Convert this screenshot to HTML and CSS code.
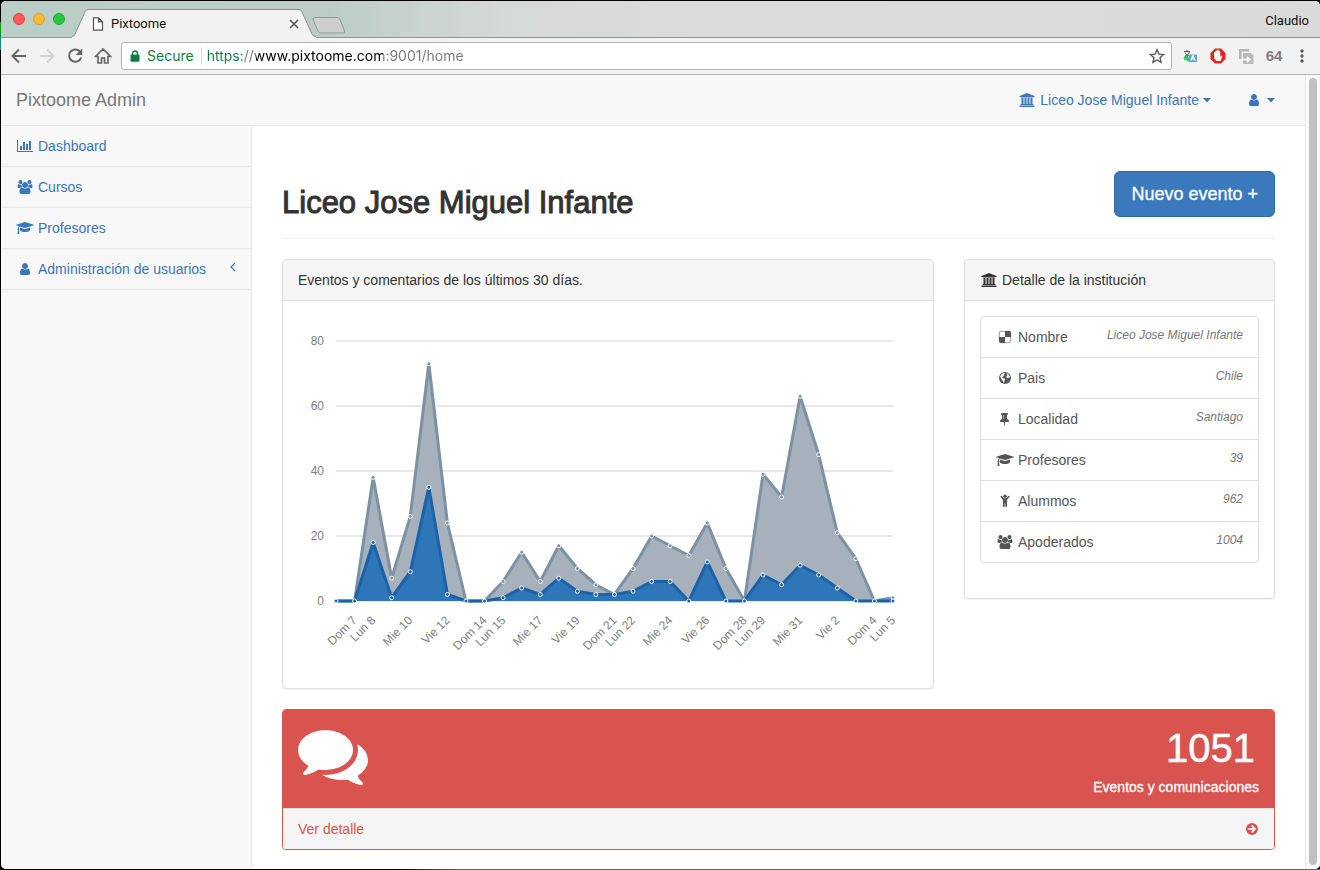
FILE: index.html
```html
<!DOCTYPE html>
<html lang="es">
<head>
<meta charset="utf-8">
<title>Pixtoome</title>
<link rel="stylesheet" href="styles.css">
</head>
<body>
<svg class="sprite" aria-hidden="true">
  <symbol id="i-user" viewBox="0 0 1792 1792"><path d="M1536 1399q0 109-62.5 187t-150.5 78h-854q-88 0-150.5-78t-62.5-187q0-85 8.5-160.5t31.5-152 58.5-131 94-89 134.5-34.5q131 128 313 128t313-128q76 0 134.5 34.5t94 89 58.5 131 31.5 152 8.5 160.5zm-256-887q0 159-112.5 271.5t-271.5 112.5-271.5-112.5-112.5-271.5 112.5-271.5 271.5-112.5 271.5 112.5 112.5 271.5z"/></symbol>
  <symbol id="i-chart" viewBox="0 0 2048 1792"><path d="M640 896v512h-256v-512h256zm384-512v1024h-256v-1024h256zm1024 1152v128h-2048v-1536h128v1408h1920zm-640-896v768h-256v-768h256zm384-384v1152h-256v-1152h256z"/></symbol>
  <symbol id="i-bank" viewBox="0 0 1920 1792"><path d="M960 0l960 384v128h-128q0 26-20.5 45t-48.5 19h-1526q-28 0-48.5-19t-20.5-45h-128v-128zm-704 640h256v768h128v-768h256v768h128v-768h256v768h128v-768h256v768h59q28 0 48.5 19t20.5 45v64h-1664v-64q0-26 20.5-45t48.5-19h59v-768zm1595 960q28 0 48.5 19t20.5 45v128h-1920v-128q0-26 20.5-45t48.5-19h1782z"/></symbol>
  <symbol id="i-cap" viewBox="0 0 2304 1792"><path d="M1774 836l18 316q4 69-82 128t-235 93.5-323 34.5-323-34.5-235-93.5-82-128l18-316 574 181q22 7 48 7t48-7zm530-324q0 23-22 31l-1120 352q-4 1-10 1t-10-1l-652-206q-43 34-71 111.5t-34 178.5q63 36 63 109 0 69-58 107l58 433q2 14-8 25-9 11-24 11h-192q-15 0-24-11-10-11-8-25l58-433q-58-38-58-107 0-73 65-111 11-207 98-330l-333-104q-22-8-22-31t22-31l1120-352q4-1 10-1t10 1l1120 352q22 8 22 31z"/></symbol>
  <symbol id="i-users" viewBox="0 0 1920 1792"><path d="M593 896q-162 5-265 128h-134q-82 0-138-40.5t-56-118.5q0-353 124-353 6 0 43.5 21t97.5 42.5 119 21.5q67 0 133-23-5 37-5 66 0 139 81 256zm1071 637q0 120-73 189.5t-194 69.5h-874q-121 0-194-69.5t-73-189.5q0-53 3.5-103.5t14-109 26.5-108.5 43-97.5 62-81 85.5-53.5 111.5-20q10 0 43 21.5t73 48 107 48 135 21.5 135-21.5 107-48 73-48 43-21.5q61 0 111.5 20t85.5 53.5 62 81 43 97.5 26.5 108.5 14 109 3.500 103.500zm-1024-1277q0 106-75 181t-181 75-181-75-75-181 75-181 181-75 181 75 75 181zm704 384q0 159-112.500 271.500t-271.500 112.500-271.500-112.500-112.500-271.500 112.500-271.500 271.500-112.500 271.500 112.500 112.500 271.500zm576 225q0 78-56 118.500t-138 40.500h-134q-103-123-265-128 81-117 81-256 0-29-5-66 66 23 133 23 59 0 119-21.500t97.500-42.500 43.500-21q124 0 124 353zm-128-609q0 106-75 181t-181 75-181-75-75-181 75-181 181-75 181 75 75 181z"/></symbol>
  <symbol id="i-comments" viewBox="0 0 1792 1792"><path d="M1408 768q0 139-94 257t-256.500 186.500-353.500 68.500q-86 0-176-16-124 88-278 128-36 9-86 16h-3q-11 0-20.500-8t-11.500-21q-1-3-1-6.500t.5-6.500 2-6l2.500-5 3.500-5.500 4-5 4.500-5 4-4.500q5-6 23-25t26-29.500 22.500-29 25-38.500 20.500-44q-124-72-195-177t-71-224q0-139 94-257t256.500-186.500 353.500-68.500 353.500 68.500 256.500 186.500 94 257zm384 256q0 120-71 224.500t-195 176.500q10 24 20.500 44t25 38.500 22.500 29 26 29.500 23 25q1 1 4 4.500t4.500 5 4 5 3.500 5.500l2.500 5 2 6 .5 6.500-1 6.500q-3 14-13 22t-22 7q-50-7-86-16-154-40-278-128-90 16-176 16-271 0-472-132 58 4 88 4 161 0 309-45t264-129q125-92 192-212t67-254q0-77-23-152 129 71 204 178t75 230z"/></symbol>
  <symbol id="i-pin" viewBox="0 0 1536 1792"><path transform="translate(-192 0)" fill-rule="evenodd" d="M800 864v-448q0-14-9-23t-23-9-23 9-9 23v448q0 14 9 23t23 9 23-9 9-23zm672 352q0 26-19 45t-45 19h-429l-51 483q-2 12-10.500 20.500t-20.500 8.500h-1q-27 0-32-27l-76-485h-404q-26 0-45-19t-19-45q0-123 78.500-221.500t177.500-98.500v-512q-52 0-90-38t-38-90 38-90 90-38h640q52 0 90 38t38 90-38 90-90 38v512q99 0 177.500 98.500t78.500 221.500z"/></symbol>
  <symbol id="i-go" viewBox="0 0 14 14"><circle cx="7" cy="7" r="6"/><path d="M3.400 7h6.400M6.600 3.600 10 7l-3.400 3.400" fill="none" stroke="#f5f5f5" stroke-width="1.800"/></symbol>
  <symbol id="i-delicious" viewBox="0 0 14 14"><rect x="1.300" y="1.300" width="11.400" height="11.400" rx="1.800" fill="#fff" stroke="currentColor" stroke-width=".6"/><path d="M7 1h4.200A1.800 1.800 0 0 1 13 2.800V7H7zM1 7h6v6H2.800A1.800 1.800 0 0 1 1 11.200z"/></symbol>
  <symbol id="i-globe" viewBox="0 0 14 14"><circle cx="7" cy="7" r="6"/><path fill="#fff" d="M3.200 3.400 5 2.200l1.500.1.500.8-1 .5.300.9-1.300.3.300 1-1.200.5.900.9 1.600.2.700 1-1 1.500.2 1.500-.8.300L4.500 9.500 3.300 7.900 2.200 5.600zM8.600 2.300l1.600.8 1.500 2.100.2 1.400-1.100-.2-.9.800-1.600-1 .5-1.500 1-.7-.9-.6z"/></symbol>
  <symbol id="i-child" viewBox="0 0 14 14"><circle cx="7" cy="2.200" r="1.700"/><path d="M2.700 1.900q.6-.5 1.100 0L6 4.300h2l2.200-2.400q.5-.5 1.100 0t.1 1.100L9.100 5.700v6.600q0 .8-.9.800t-.9-.8V9.500h-.6v2.800q0 .8-.9.800t-.9-.8V5.700L2.600 3q-.4-.6.100-1.100z"/></symbol>
  <symbol id="i-caret" viewBox="0 0 8 14"><path d="M0 5h8L4 9.500z"/></symbol>
</svg>

<div class="desktop">
<div class="window">
  <header class="tabstrip">
    <div class="lights"><button class="light red" aria-label="Cerrar"></button><button class="light amber" aria-label="Minimizar"></button><button class="light green" aria-label="Ampliar"></button></div>
    <div class="tab">
      <svg class="tab-shape" viewBox="0 0 244 30" preserveAspectRatio="none" aria-hidden="true"><path d="M0 30V28.500Q2 28.500 3 26L13 3q1-2.500 3-2.500H227q2 0 3 2.500l10 23q1 2.500 4 2.500V30z" fill="#f2f2f2"/><path d="M0 28.500Q2 28.500 3 26L13 3q1-2.500 3-2.500H227q2 0 3 2.500l10 23q1 2.500 4 2.500" fill="none" stroke="#858f8c"/></svg>
      <svg class="file" viewBox="0 0 12 14" aria-hidden="true"><path d="M1.500.8h5l4 4v8.400h-9zM6.500.8v4h4" fill="#fff" stroke="#555" stroke-width="1.200"/></svg>
      <span class="tab-title">Pixtoome</span>
      <button class="tab-close" aria-label="Cerrar pestaña"><svg viewBox="0 0 10 10"><path d="m1 1 8 8M9 1 1 9" stroke="#555" stroke-width="1.600"/></svg></button>
    </div>
    <button class="newtab" aria-label="Nueva pestaña"><svg viewBox="0 0 34 17"><path d="M3 .5h22q2 0 3 2l4.500 11.500q.7 2-1.500 2H9q-2 0-3-2L1 2.500Q.5.500 3 .5z" fill="#cecece" stroke="#909896"/></svg></button>
    <span class="profile">Claudio</span>
  </header>

  <div class="toolbar">
    <button class="tool" aria-label="Atrás"><svg viewBox="0 0 18 18"><path d="M16 9H3M9 2.500 2.500 9 9 15.500" fill="none" stroke="#666" stroke-width="2"/></svg></button>
    <button class="tool" aria-label="Adelante"><svg viewBox="0 0 18 18"><path d="M2 9h13M9 2.500 15.500 9 9 15.500" fill="none" stroke="#d2d2d2" stroke-width="2"/></svg></button>
    <button class="tool" aria-label="Recargar"><svg viewBox="0 0 18 18"><path d="M14.500 5.200A6.200 6.200 0 1 0 15.200 10.500" fill="none" stroke="#666" stroke-width="2"/><path d="M16.200 1.500V8H9.700z" fill="#666"/></svg></button>
    <button class="tool" aria-label="Inicio"><svg viewBox="0 0 18 18"><path d="M1.500 9.500 9 2l7.500 7.500H14V16h-3.500v-5h-3v5H4V9.500z" fill="none" stroke="#666" stroke-width="1.700"/></svg></button>
    <div class="omnibox">
      <svg class="lock" viewBox="0 0 10 12" aria-hidden="true"><path d="M2.500 5V3.500a2.500 2.500 0 0 1 5 0V5" fill="none" stroke="#0b8043" stroke-width="1.400"/><rect x=".5" y="4.500" width="9" height="7.200" rx="1" fill="#0b8043"/></svg>
      <label class="secure" for="url">Secure</label>
      <input class="url" id="url" type="text" value="https://www.pixtoome.com:9001/home">
      <button class="star" aria-label="Marcador"><svg viewBox="0 0 16 16"><path d="m8 1.600 1.900 4.500 4.800.4-3.700 3.200 1.100 4.700L8 11.900l-4.100 2.500L5 9.700 1.300 6.500l4.800-.4z" fill="none" stroke="#555" stroke-width="1.300"/></svg></button>
    </div>
    <div class="extensions">
      <button class="tool" aria-label="Traductor"><svg viewBox="0 0 18 18"><path d="M4 9c0 4 3 6 7 6v-3c-2 0-4-1-4-3z" fill="#35b36b"/><circle cx="5" cy="11" r="2.300" fill="#43c27a"/><path d="M3 4.500h6M6 3v1.500M4 9c3-1 4-2 4.500-4.500M4 5.500C5 7 6 8.500 8.500 9" fill="none" stroke="#555"/><rect x="8" y="7.500" width="8" height="7.500" rx="1" fill="#5ba4d8"/><path d="m9.800 13.500 2.200-5 2.200 5M10.500 12h3" stroke="#fff" stroke-width="1.200" fill="none"/></svg></button>
      <button class="tool" aria-label="Bloqueador"><svg viewBox="0 0 18 18"><path d="M6 1.500h6L16.500 6v6L12 16.500H6L1.500 12V6z" fill="#e5231b"/><path d="M5 8V5.200q.8-.8 1.500 0V8 3.800q.8-.8 1.600 0V7.500 3.200q.8-.8 1.600 0v4.500V4q.8-.8 1.500 0v6l1.300-1.500q1-.3.800.7L11.500 14h-4Q5 12 5 10z" fill="#fff"/></svg></button>
      <button class="tool" aria-label="Copiar"><svg viewBox="0 0 18 18"><path d="M2 2h10v2.500H4.500V12H2z" fill="#b5b5b5"/><path d="M6 6h8l2.500 2.500V17H6z" fill="#b9b9b9"/><path d="M5 11.500h5V9l4 3.500L10 16v-2.500H5z" fill="#fff"/></svg></button>
      <button class="tool sixty" aria-label="64">64</button>
      <button class="tool" aria-label="Menú"><svg viewBox="0 0 18 18" fill="#5a5a5a"><circle cx="9" cy="4" r="1.700"/><circle cx="9" cy="9" r="1.700"/><circle cx="9" cy="14" r="1.700"/></svg></button>
    </div>
  </div>

  <div class="viewport">
    <div class="page">
      <nav class="navbar">
        <a class="brand" href="#">Pixtoome Admin</a>
        <div class="nav-right">
          <a class="nav-link" href="#"><svg class="icon"><use href="#i-bank"/></svg>Liceo Jose Miguel Infante<svg class="caret"><use href="#i-caret"/></svg></a>
          <a class="nav-link" href="#" aria-label="Usuario"><svg class="icon"><use href="#i-user"/></svg><svg class="caret"><use href="#i-caret"/></svg></a>
        </div>
      </nav>
      <div class="columns">
        <aside class="sidebar">
          <a class="side-link" href="#"><svg class="icon"><use href="#i-chart"/></svg>Dashboard</a>
          <a class="side-link" href="#"><svg class="icon"><use href="#i-users"/></svg>Cursos</a>
          <a class="side-link" href="#"><svg class="icon"><use href="#i-cap"/></svg>Profesores</a>
          <a class="side-link" href="#"><svg class="icon"><use href="#i-user"/></svg>Administración de usuarios<svg class="chevron" viewBox="0 0 6 10"><path d="M5 1 1 5l4 4" fill="none" stroke="currentColor" stroke-width="1.200"/></svg></a>
        </aside>
        <main class="main">
          <div class="page-header">
            <h1 class="title">Liceo Jose Miguel Infante</h1>
            <button class="primary">Nuevo evento +</button>
          </div>
          <div class="row">
            <section class="panel">
              <h2 class="panel-heading">Eventos y comentarios de los últimos 30 días.</h2>
              <div class="panel-body"><svg class="chart" id="chart" viewBox="298 316 620 357" role="img" aria-label="Eventos y comentarios"></svg></div>
            </section>
            <section class="panel">
              <h2 class="panel-heading"><svg class="icon"><use href="#i-bank"/></svg>Detalle de la institución</h2>
              <div class="panel-body">
                <ul class="list">
                  <li class="item"><svg class="icon"><use href="#i-delicious"/></svg>Nombre<em class="value">Liceo Jose Miguel Infante</em></li>
                  <li class="item"><svg class="icon"><use href="#i-globe"/></svg>Pais<em class="value">Chile</em></li>
                  <li class="item"><svg class="icon"><use href="#i-pin"/></svg>Localidad<em class="value">Santiago</em></li>
                  <li class="item"><svg class="icon"><use href="#i-cap"/></svg>Profesores<em class="value">39</em></li>
                  <li class="item"><svg class="icon"><use href="#i-child"/></svg>Alummos<em class="value">962</em></li>
                  <li class="item"><svg class="icon"><use href="#i-users"/></svg>Apoderados<em class="value">1004</em></li>
                </ul>
              </div>
            </section>
          </div>
          <section class="summary">
            <div class="summary-top">
              <svg class="big-icon" aria-hidden="true"><use href="#i-comments"/></svg>
              <div class="figures"><div class="huge">1051</div><div class="caption">Eventos y comunicaciones</div></div>
            </div>
            <a class="summary-foot" href="#">Ver detalle<svg class="go"><use href="#i-go"/></svg></a>
          </section>
        </main>
      </div>
    </div>
    <div class="scrollbar"><div class="thumb"></div></div>
  </div>
</div>
</div>
<script src="chart.js"></script>
</body>
</html>
```

FILE: styles.css
```css
* { box-sizing: border-box; }
body { margin: 0; font: 14px/20px "Liberation Sans", Arial, sans-serif; color: #333; }
button { margin: 0; padding: 0; border: 0; background: none; font: inherit; color: inherit; }
a { color: #3a76b9; text-decoration: none; }
svg { display: block; flex: none; }
.sprite { position: absolute; width: 0; height: 0; }
.desktop { display: flex; min-height: 100vh; padding: 1px 0 1px 1px; background: linear-gradient(90deg, #000 30%, #666 35%) 0 100% / 100% 1px no-repeat, linear-gradient(#000 22px, #0a9a0a 22px 36px, #0a8a8a 36px 50px, #000 50px); }
.window { flex: 1; display: flex; flex-direction: column; min-width: 0; overflow: hidden; border-radius: 5px; background: #fff; }

.tabstrip { display: flex; align-items: flex-end; height: 37px; padding: 0 11px 0 12px; border-bottom: 1px solid #8f9694; background: linear-gradient(90deg, #b9cec6, #bccdc7 25%, #d5d9d7 38%, #dadbda 50%, #dadada); font: 13px/18px Roboto, sans-serif; color: #111; }
.lights { display: flex; gap: 8px; align-self: center; }
.light { width: 12px; height: 12px; border-radius: 50%; }
.red { background: #fc5b57; border: 1px solid #e2463f; }
.amber { background: #fdbc2e; border: 1px solid #dfa023; }
.green { background: #28c83f; border: 1px solid #1aab29; }
.tab { position: relative; display: flex; align-items: center; width: 244px; height: 29px; margin: 0 -4px -1px 7px; padding: 0 17px 0 20px; }
.tab-shape { position: absolute; inset: 0; width: 100%; height: 100%; }
.file { position: relative; width: 12px; height: 14px; }
.tab-title { position: relative; margin-left: 7px; }
.tab-close { position: relative; margin-left: auto; }
.tab-close svg { width: 10px; height: 10px; }
.newtab { margin-bottom: 3px; }
.newtab svg { width: 34px; height: 17px; }
.profile { align-self: center; margin: 3px 0 0 auto; }

.toolbar { display: flex; align-items: center; height: 37px; padding: 0 9px; gap: 10px; border-bottom: 1px solid #b5b5b5; background: #f2f2f2; }
.tool svg { width: 18px; height: 18px; }
.omnibox { flex: 1; display: flex; align-items: center; min-width: 0; height: 28px; margin: 0 -1px; padding: 0 6px 0 8px; border: 1px solid #b0b0b0; border-radius: 3px; background: #fff; font: 14px/18px Inter, sans-serif; }
.lock { width: 10px; height: 12px; }
.secure { margin-left: 7px; padding-right: 7px; border-right: 1px solid #ddd; color: #0b8043; }
.url { flex: 1; min-width: 0; margin-left: 5px; padding: 0; border: 0; outline: 0; font: inherit; color: transparent; background: linear-gradient(90deg, #0b8043 35px, #777 35px 49px, #000 49px 176px, #777 176px); -webkit-background-clip: text; background-clip: text; }
.star svg { width: 16px; height: 16px; }
.extensions { display: flex; gap: 10px; align-items: center; }
.sixty { width: 18px; font-weight: 700; font-size: 15px; color: #7d7d7d; }

.viewport { flex: 1; display: flex; }
.page { flex: 1; display: flex; flex-direction: column; min-width: 0; }
.navbar { display: flex; align-items: center; justify-content: space-between; height: 51px; padding: 0 15px; border-bottom: 1px solid #e7e7e7; background: #f8f8f8; }
.brand { font-size: 18px; color: #777; }
.nav-right { display: flex; gap: 4px; }
.nav-link { display: flex; align-items: center; gap: 4px; padding: 15px; }
.icon { width: 18px; height: 14px; fill: currentColor; }
.caret { width: 8px; height: 14px; fill: currentColor; }
.columns { flex: 1; display: flex; }
.sidebar { flex: none; width: 251px; border-right: 1px solid #e7e7e7; background: #f8f8f8; }
.side-link { display: flex; align-items: center; gap: 4px; padding: 10px 15px; border-bottom: 1px solid #e7e7e7; }
.chevron { width: 6px; height: 10px; margin: 0 0 4px auto; }
.main { flex: 1; min-width: 0; padding: 45px 30px 18px; }
.page-header { display: flex; justify-content: space-between; align-items: flex-start; padding-bottom: 17px; border-bottom: 1px solid #eee; margin-bottom: 20px; }
.title { margin: 14px 0 0; font-size: 31px; line-height: 36px; font-weight: 400; -webkit-text-stroke: 1px; }
.primary { height: 46px; padding: 0 16px; border: 1px solid #2e6da4; border-radius: 6px; background: #3a79bc; color: #fff; font-size: 18px; -webkit-text-stroke: 0.3px; }
.row { display: grid; grid-template-columns: calc((100% + 30px) * 2 / 3 - 30px) 1fr; gap: 30px; align-items: start; }
.panel { border: 1px solid #ddd; border-radius: 4px; box-shadow: 0 1px 1px rgba(0, 0, 0, .05); overflow: hidden; }
.panel-heading { display: flex; align-items: center; gap: 4px; margin: 0; padding: 10px 15px; border-bottom: 1px solid #ddd; background: #f5f5f5; font-size: 14px; line-height: 20px; font-weight: 400; }
.panel-body { padding: 15px; }
.chart { width: 100%; height: auto; font-size: 12px; fill: #808080; }
.list { margin: 0 0 20px; padding: 0; list-style: none; border: 1px solid #ddd; border-radius: 4px; }
.item { display: flex; align-items: center; gap: 4px; padding: 10px 15px; color: #555; }
.item + .item { border-top: 1px solid #ddd; }
.value { margin: 0 0 4px auto; font-size: 12px; line-height: 16px; color: #777; }
.summary { margin-top: 20px; border: 1px solid #d9534f; border-radius: 4px; overflow: hidden; }
.summary-top { display: flex; justify-content: space-between; padding: 10px 15px 11px; background: #d9534f; color: #fff; }
.big-icon { width: 70px; height: 70px; fill: currentColor; }
.figures { text-align: right; }
.huge { padding-right: 4px; font-size: 40px; line-height: 57px; -webkit-text-stroke: 0.5px; }
.caption { -webkit-text-stroke: 0.3px; }
.summary-foot { display: flex; justify-content: space-between; align-items: center; padding: 10px 15px; border-top: 1px solid #ddd; background: #f5f5f5; color: #d9534f; }
.go { width: 14px; height: 14px; fill: currentColor; }
.scrollbar { width: 15px; padding: 3px 3px 4px; border-left: 1px solid #e6e6e6; background: #fafafa; display: flex; }
.thumb { width: 8px; border-radius: 4px; background: #c1c1c1; }
```

FILE: chart.js
```js
const svg = document.getElementById("chart");
const total = [0,0,38,7,26,73,24,0,0,6,15,6,17,10,5,2,10,20,17,14,24,10,0,39,32,63,45,21,13,0,1];
const events = [0,0,18,1,9,35,2,0,0,1,4,2,7,3,2,2,3,6,6,0,12,0,0,8,5,11,8,4,0,0,0];
const labels = {1:"Dom 7",2:"Lun 8",4:"Mie 10",6:"Vie 12",8:"Dom 14",9:"Lun 15",11:"Mie 17",13:"Vie 19",15:"Dom 21",16:"Lun 22",18:"Mie 24",20:"Vie 26",22:"Dom 28",23:"Lun 29",25:"Mie 31",27:"Vie 2",29:"Dom 4",30:"Lun 5"};
const left = 336, right = 893, base = 601, unit = 3.25;
const x = i => left + i * (right - left) / 30;
const y = v => base - v * unit;

function add(name, attrs, text) {
  const el = document.createElementNS("http://www.w3.org/2000/svg", name);
  for (const key in attrs) el.setAttribute(key, attrs[key]);
  if (text !== undefined) el.textContent = text;
  svg.appendChild(el);
}

for (const v of [0, 20, 40, 60, 80]) {
  add("line", {x1: left, x2: right, y1: y(v), y2: y(v), stroke: "#e8e8e8", "stroke-width": 2});
  add("text", {x: 324, y: y(v) + 4, "text-anchor": "end"}, v);
}
function area(data, fill, stroke) {
  const line = data.map((v, i) => x(i) + "," + y(v)).join(" ");
  add("polygon", {points: `${left},${base} ${line} ${right},${base}`, fill});
  add("polyline", {points: line, fill: "none", stroke, "stroke-width": 3, "stroke-linejoin": "round"});
}
function dots(data, fill) {
  data.forEach((v, i) => add("circle", {cx: x(i), cy: y(v), r: 2, fill, stroke: "#fff", "stroke-width": 1}));
}
area(total, "#a7b1bc", "#7a92a3");
dots(total, "#7a92a3");
area(events, "#2f76b9", "#1b62a8");
dots(events, "#1b62a8");
for (const i in labels) {
  add("text", {"text-anchor": "end", transform: `translate(${x(+i) + 3} 621) rotate(-45)`}, labels[i]);
}
```
